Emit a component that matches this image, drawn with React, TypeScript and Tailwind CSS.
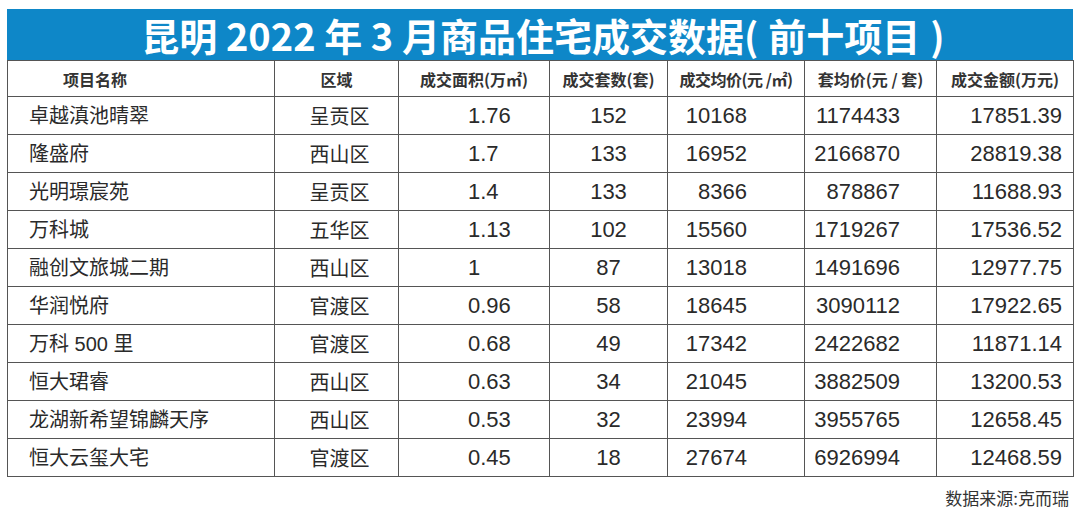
import React from 'react';

type Row = {
  name: string;
  area: string;
  size: string;
  units: string;
  price: string;
  unitPrice: string;
  total: string;
};

const rows: Row[] = [
  { name: '卓越滇池晴翠', area: '呈贡区', size: '1.76', units: '152', price: '10168', unitPrice: '1174433', total: '17851.39' },
  { name: '隆盛府', area: '西山区', size: '1.7', units: '133', price: '16952', unitPrice: '2166870', total: '28819.38' },
  { name: '光明璟宸苑', area: '呈贡区', size: '1.4', units: '133', price: '8366', unitPrice: '878867', total: '11688.93' },
  { name: '万科城', area: '五华区', size: '1.13', units: '102', price: '15560', unitPrice: '1719267', total: '17536.52' },
  { name: '融创文旅城二期', area: '西山区', size: '1', units: '87', price: '13018', unitPrice: '1491696', total: '12977.75' },
  { name: '华润悦府', area: '官渡区', size: '0.96', units: '58', price: '18645', unitPrice: '3090112', total: '17922.65' },
  { name: '万科 500 里', area: '官渡区', size: '0.68', units: '49', price: '17342', unitPrice: '2422682', total: '11871.14' },
  { name: '恒大珺睿', area: '西山区', size: '0.63', units: '34', price: '21045', unitPrice: '3882509', total: '13200.53' },
  { name: '龙湖新希望锦麟天序', area: '西山区', size: '0.53', units: '32', price: '23994', unitPrice: '3955765', total: '12658.45' },
  { name: '恒大云玺大宅', area: '官渡区', size: '0.45', units: '18', price: '27674', unitPrice: '6926994', total: '12468.59' },
];

const cjk = "font-['Noto_Sans_CJK_SC',sans-serif]";
const num = "font-['Liberation_Sans','Noto_Sans_CJK_SC',sans-serif]";

const App: React.FC = () => {
  return (
    <div className="w-[1080px] h-[511px] bg-white pl-[7px] pt-[9px]">
      <div className="w-[1066px]">
        <div className={`h-[51px] bg-[#0e87c8] flex items-center justify-center pl-[6px] text-white font-bold text-[38px] leading-none ${cjk}`}>
          昆明 2022 年 3 月商品住宅成交数据(<span className="ml-[10px]">前十项目</span><span className="ml-[10px]">)</span>
        </div>
        <table className="w-[1066px] table-fixed border-collapse border border-[#555] text-[#2a2a2a]">
          <colgroup>
            <col className="w-[267px]" />
            <col className="w-[124px]" />
            <col className="w-[151px]" />
            <col className="w-[118px]" />
            <col className="w-[137px]" />
            <col className="w-[132px]" />
            <col className="w-[137px]" />
          </colgroup>
          <thead>
            <tr className={`h-[36px] text-[16px] font-bold text-[#333] ${cjk}`}>
              <th className="border border-[#555] text-left pl-[55px] font-bold">项目名称</th>
              <th className="border border-[#555] text-center font-bold">区域</th>
              <th className="border border-[#555] text-center font-bold whitespace-nowrap">成交面积(万㎡)</th>
              <th className="border border-[#555] text-center font-bold whitespace-nowrap">成交套数(套)</th>
              <th className="border border-[#555] text-center font-bold whitespace-nowrap tracking-[-0.5px]">成交均价(元 /㎡)</th>
              <th className="border border-[#555] text-center font-bold whitespace-nowrap">套均价(元 / 套)</th>
              <th className="border border-[#555] text-center font-bold whitespace-nowrap">成交金额(万元)</th>
            </tr>
          </thead>
          <tbody>
            {rows.map(r => (
              <tr key={r.name} className="h-[38px]">
                <td className={`border border-[#555] pl-[21px] text-[20px] ${num}`}>{r.name}</td>
                <td className={`border border-[#555] text-center pl-[6px] text-[20px] ${cjk}`}>{r.area}</td>
                <td className={`border border-[#555] pl-[69px] text-[22px] ${num}`}>{r.size}</td>
                <td className={`border border-[#555] text-center text-[22px] ${num}`}>{r.units}</td>
                <td className={`border border-[#555] text-right pr-[57px] text-[22px] ${num}`}>{r.price}</td>
                <td className={`border border-[#555] text-right pr-[36px] text-[22px] ${num}`}>{r.unitPrice}</td>
                <td className={`border border-[#555] text-right pr-[11px] text-[22px] ${num}`}>{r.total}</td>
              </tr>
            ))}
          </tbody>
        </table>
        <div className={`text-right pr-[4px] pt-[8px] text-[17px] text-[#333] ${cjk}`}>数据来源:克而瑞</div>
      </div>
    </div>
  );
};

export default App;
